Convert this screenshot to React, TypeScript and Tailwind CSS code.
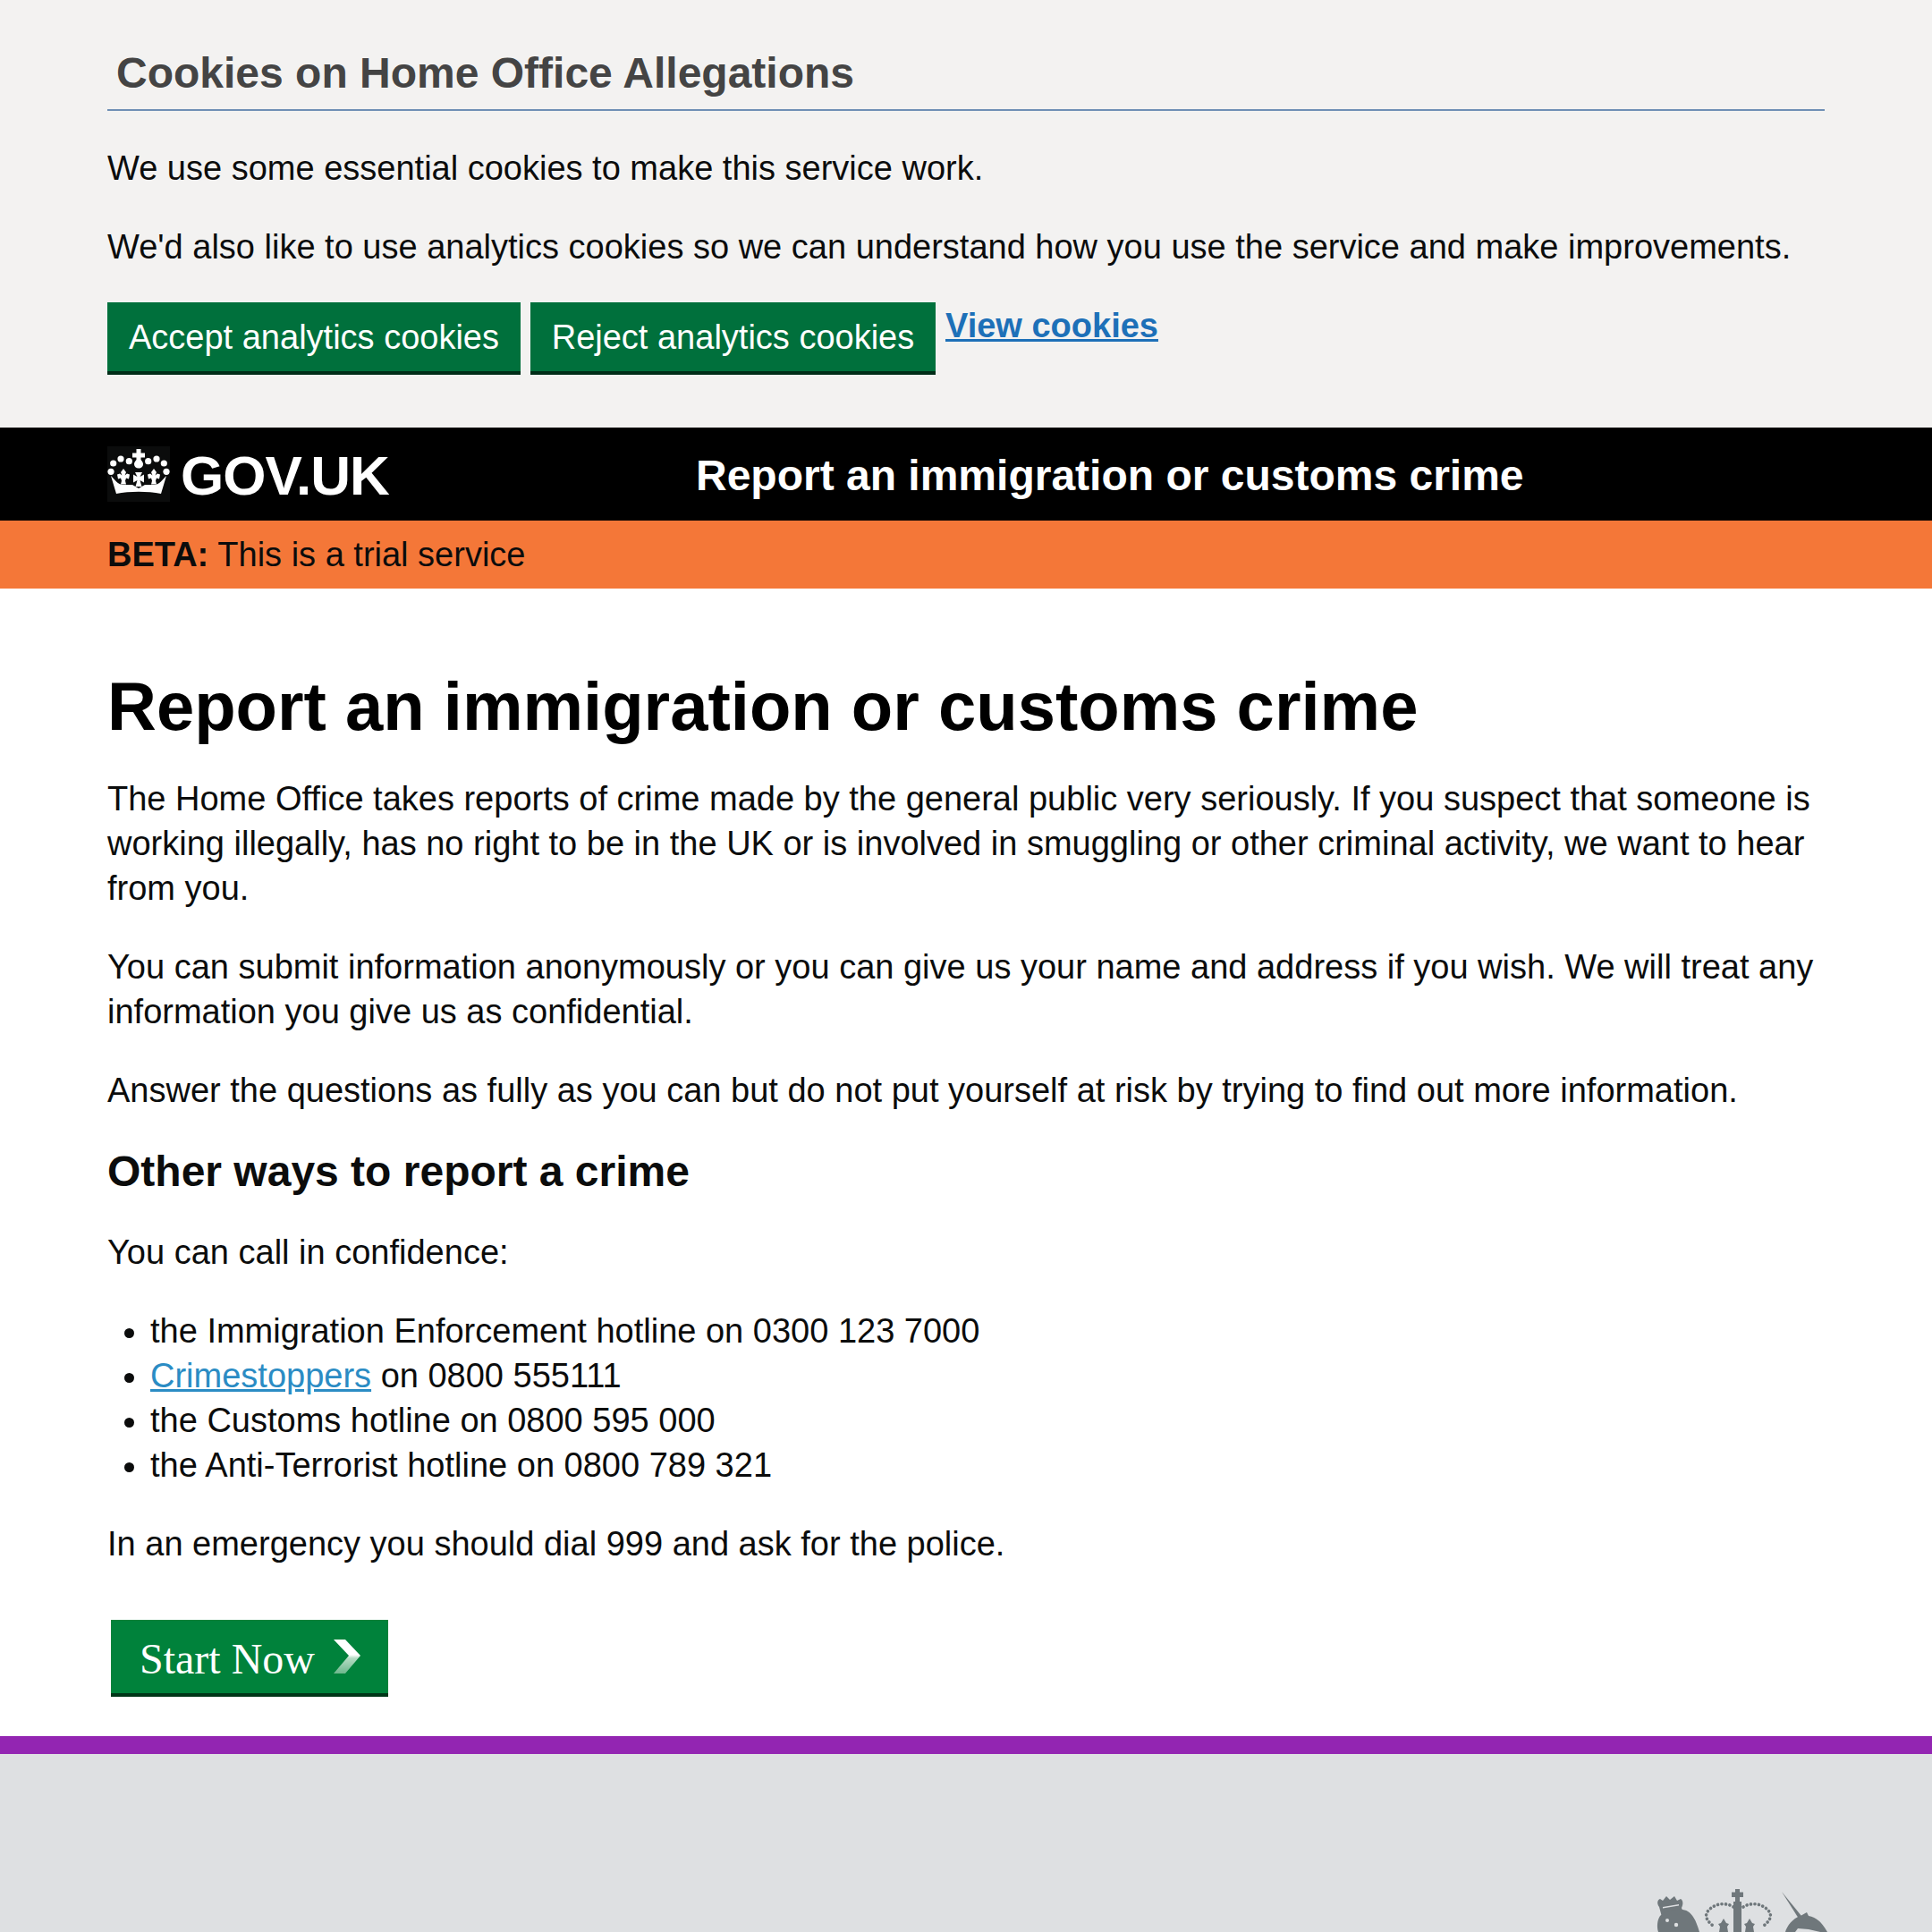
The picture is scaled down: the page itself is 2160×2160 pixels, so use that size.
import React from "react";

function Crown() {
  const fleur = "l3 4-1.500 3.500 2.500-2 3 1-1 5-3-1-1 3 1 4h-6l1-4-1-3-3 1-1-5 3-1 2.500 2L-3 4z";
  return (
    <svg viewBox="0 0 70 62" className="w-[70px] h-[62px] bg-[#0b0c0c] shrink-0">
      <g fill="#fff">
        <path d="M32.500 3h5v4.500h4.500v5h-4.500v2.500c1.800 2 2.500 3.500 2.500 5 0 2.500-2 4.500-5 4.500s-5-2-5-4.500c0-1.500.7-3 2.500-5v-2.500H28v-5h4.500z" />
        <circle cx="6.700" cy="19" r="3.600" />
        <circle cx="15" cy="14" r="3.600" />
        <circle cx="24.300" cy="16.700" r="3.600" />
        <circle cx="45.700" cy="16.700" r="3.600" />
        <circle cx="55" cy="14" r="3.600" />
        <circle cx="63.300" cy="19" r="3.600" />
        <circle cx="4" cy="28.300" r="3.600" />
        <circle cx="66" cy="28.300" r="3.600" />
        <g transform="translate(18 25)"><path d={`M0 0${fleur}`} /></g>
        <g transform="translate(52 25)"><path d={`M0 0${fleur}`} /></g>
        <polygon points="31,29 39,29 36.500,34 41,31.500 41,40.500 36.500,38 38.500,45 31.500,45 33.500,38 29,40.500 29,31.500 33.500,34" />
        <path d="M4 33C9 38 11 42 17 43L28 43 35 47 42 43 53 43C59 42 61 38 66 33L60 53C45 50 25 50 10 53Z" />
      </g>
    </svg>
  );
}

function Crest() {
  return (
    <svg viewBox="0 0 220 50" className="w-[220px] h-[50px] shrink-0 self-end" fill="#6f777b">
      <path d="M15 22c-3-4-2-8 1-9l3 2 4-5 4 4 5-4 3 5 4-2c3 2 3 6 1 10l2 7-24 3z" />
      <path d="M14 50c-2-6-1-14 2-18 5-5 14-6 23-8 3 2 6 1 8 3 5 3 9 9 13 23z" />
      <g fill="#dee0e2">
        <circle cx="24" cy="37" r="2" /><circle cx="34" cy="42" r="2.200" />
        <path d="M19 22l18-3v1.500l-18 3z" />
      </g>
      <path d="M100 2h5v3.500h4v5.500h-4v5h2v34h-9V16h2v-5h-4V5.500h4z" />
      <path d="M98 22C92 18 84 18 79 20 71 23 66 29 68 34 69 38 72 40 75 43" fill="none" stroke="#6f777b" strokeWidth="3.600" strokeDasharray="0.1 4.400" strokeLinecap="round" />
      <path d="M109 22c6-4 14-4 19-2 8 3 13 9 11 14-1 4-4 6-7 9" fill="none" stroke="#6f777b" strokeWidth="3.600" strokeDasharray="0.1 4.400" strokeLinecap="round" />
      <path d="M87 35l3 5 3 1-2 3 1 6h-10l1-6-2-3 3-1z" />
      <path d="M116 35l3 5 3 1-2 3 1 6h-10l1-6-2-3 3-1z" />
      <path d="M152 5l22 27-3 3z" />
      <path d="M156 50c2-7 8-15 17-18l7-4 2 4c8 1 15 7 21 18h-8l-13-3-12-1-3 4z" />
    </svg>
  );
}

export default function App() {
  return (
    <div className="h-[2160px] overflow-hidden bg-white font-['Liberation_Sans',Arial,sans-serif] text-[#0b0c0c] flex flex-col">
      <section className="bg-[#f3f2f1] h-[478px] shrink-0 px-[120px] pt-[50px]">
        <h2 className="text-[#444] font-bold text-[48px] leading-[64px] pl-[10px] pb-[8px] border-b-2 border-[#6f8fb5]">Cookies on Home Office Allegations</h2>
        <p className="text-[38px] leading-[50px] mt-[39px]">We use some essential cookies to make this service work.</p>
        <p className="text-[38px] leading-[50px] mt-[38px]">We'd also like to use analytics cookies so we can understand how you use the service and make improvements.</p>
        <div className="flex items-start gap-[11px] mt-[37px]">
          <button className="bg-[#00703c] text-white text-[38px] leading-[50px] h-[81px] px-[24px] border-b-4 border-[#002d18] shrink-0">Accept analytics cookies</button>
          <button className="bg-[#00703c] text-white text-[38px] leading-[50px] h-[81px] w-[453px] border-b-4 border-[#002d18] shrink-0">Reject analytics cookies</button>
          <a href="#" className="text-[#1d70b8] font-bold underline text-[38px] leading-[50px] mt-[1px]">View cookies</a>
        </div>
      </section>
      <header className="bg-black h-[104px] shrink-0 px-[120px] flex items-center text-white font-bold">
        <Crown />
        <span className="text-[62px] leading-none tracking-[-1px] ml-[12px] mt-[3px] w-[576px] shrink-0">GOV.UK</span>
        <span className="text-[48px] leading-none mt-[4px]">Report an immigration or customs crime</span>
      </header>
      <div className="bg-[#f47738] h-[76px] shrink-0 px-[120px] flex items-center text-[38px] leading-[50px]">
        <strong className="font-bold">BETA:</strong><span className="ml-[10px]">This is a trial service</span>
      </div>
      <main className="h-[1283px] shrink-0 px-[120px] pt-[87px] text-[38px] leading-[50px]">
        <h1 className="font-bold text-[76px] leading-[90px] text-black">Report an immigration or customs crime</h1>
        <p className="mt-[33px]">The Home Office takes reports of crime made by the general public very seriously. If you suspect that someone is working illegally, has no right to be in the UK or is involved in smuggling or other criminal activity, we want to hear from you.</p>
        <p className="mt-[38px]">You can submit information anonymously or you can give us your name and address if you wish. We will treat any information you give us as confidential.</p>
        <p className="mt-[38px]">Answer the questions as fully as you can but do not put yourself at risk by trying to find out more information.</p>
        <h2 className="font-bold text-[48px] leading-[60px] mt-[36px]">Other ways to report a crime</h2>
        <p className="mt-[35px]">You can call in confidence:</p>
        <ul className="list-disc pl-[48px] mt-[38px]">
          <li>the Immigration Enforcement hotline on 0300 123 7000</li>
          <li><a href="#" className="text-[#2b8cc4] underline">Crimestoppers</a> on 0800 555111</li>
          <li>the Customs hotline on 0800 595 000</li>
          <li>the Anti-Terrorist hotline on 0800 789 321</li>
        </ul>
        <p className="mt-[38px]">In an emergency you should dial 999 and ask for the police.</p>
        <button className="ml-[4px] mt-[60px] w-[310px] h-[86px] bg-[#00823b] border-b-4 border-[#003618] flex items-center pl-[32px] text-white font-['Liberation_Serif',serif] text-[48px] leading-none">
          <span className="mt-[6px]">Start Now</span>
          <svg viewBox="0 0 30 38" className="w-[30px] h-[38px] ml-[21px]">
            <defs>
              <linearGradient id="chev" x1="0" y1="0" x2="0" y2="1">
                <stop offset="0" stopColor="#fff" />
                <stop offset="0.45" stopColor="#fff" />
                <stop offset="0.55" stopColor="#b5dcc4" />
                <stop offset="1" stopColor="#6db78c" />
              </linearGradient>
            </defs>
            <path d="M0 0h13l17 18-17 20H0l17-20z" fill="url(#chev)" />
          </svg>
        </button>
      </main>
      <div className="bg-[#9325b2] h-[20px] shrink-0 w-full" />
      <footer className="bg-[#dee0e2] flex-1 flex justify-end pr-[100px]">
        <Crest />
      </footer>
    </div>
  );
}
